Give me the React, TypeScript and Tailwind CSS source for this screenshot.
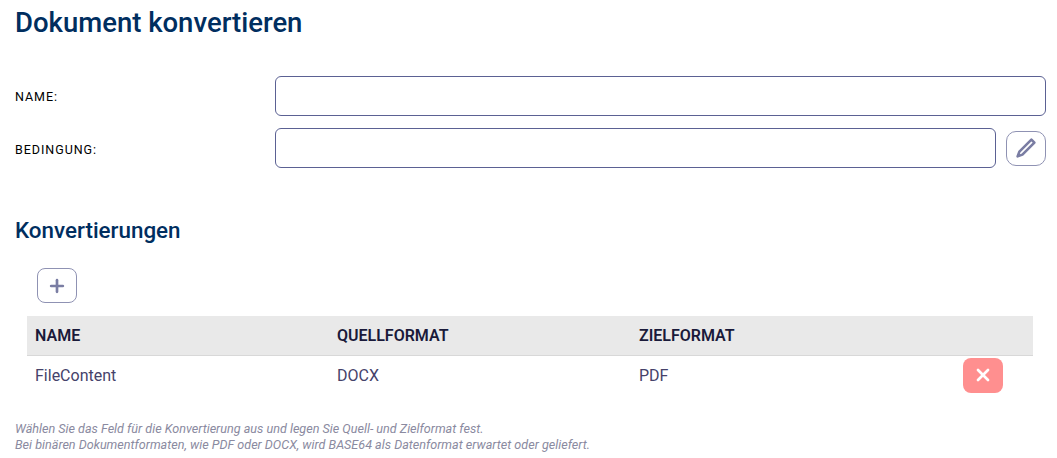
import { Plus, X } from 'lucide-react';

const rows = [{ name: 'FileContent', source: 'DOCX', target: 'PDF' }];

export default function App() {
  return (
    <main className="w-[1057px] h-[458px] overflow-hidden bg-white pl-[15px] pr-[11px] font-['Roboto',sans-serif]">
      <h1 className="pt-[6px] text-[27.5px] leading-[34px] font-medium text-[#002e5f]">Dokument konvertieren</h1>

      <div className="mt-[36px] flex items-center h-[40px]">
        <label className="w-[260px] pt-[3px] text-[12.5px] tracking-[0.95px] text-black">NAME:</label>
        <input className="flex-1 h-[40px] rounded-[6px] border border-[#5b6193] bg-white" />
      </div>
      <div className="mt-[12px] flex items-center h-[40px]">
        <label className="w-[260px] pt-[5px] text-[12.5px] tracking-[0.95px] text-black">BEDINGUNG:</label>
        <input className="flex-1 h-[40px] rounded-[6px] border border-[#5b6193] bg-white" />
        <button className="ml-[10px] w-[40px] h-[35px] flex items-center justify-center rounded-[10px] border border-[#8f92b3] bg-white text-[#7a7da3]">
          <svg width="22" height="22" viewBox="0 0 22 22" fill="none" stroke="currentColor" strokeWidth="2.6" strokeLinejoin="round">
            <path d="M16.4 2.6 L19.4 5.6 L7.4 17.6 L2.6 19.4 L4.4 14.6 Z" />
          </svg>
        </button>
      </div>

      <h2 className="mt-[48px] text-[22.4px] leading-[28px] font-medium text-[#002e5f]">Konvertierungen</h2>

      <div className="pl-[12px] pr-[13px]">
        <button className="mt-[24px] ml-[10px] w-[40px] h-[35px] flex items-center justify-center rounded-[8px] border border-[#8f92b3] bg-white text-[#7a7da3]">
          <Plus size={20} strokeWidth={3.2} />
        </button>
        <table className="mt-[13px] w-full table-fixed border-collapse text-left text-[16px]">
          <thead>
            <tr className="h-[39px] bg-[#e9e9e9] border-b border-[#d8d8d8] text-[#1a1a3a]">
              <th className="w-[302px] pl-[8px] pt-[2px] font-semibold">NAME</th>
              <th className="w-[302px] pl-[8px] pt-[2px] font-semibold">QUELLFORMAT</th>
              <th className="pl-[8px] pt-[2px] font-semibold">ZIELFORMAT</th>
              <th className="w-[70px]" />
            </tr>
          </thead>
          <tbody>
            {rows.map((row) => (
              <tr key={row.name} className="h-[40px] text-[#45426a]">
                <td className="pl-[8px] pt-[1px]">{row.name}</td>
                <td className="pl-[8px] pt-[1px]">{row.source}</td>
                <td className="pl-[8px] pt-[1px]">{row.target}</td>
                <td>
                  <button className="w-[40px] h-[35px] flex items-center justify-center rounded-[8px] bg-[#ff8f8f] text-white">
                    <X size={20} strokeWidth={3.2} />
                  </button>
                </td>
              </tr>
            ))}
          </tbody>
        </table>
      </div>

      <p className="mt-[26px] text-[12.6px] leading-[16px] italic text-[#8a8aa0]">
        Wählen Sie das Feld für die Konvertierung aus und legen Sie Quell- und Zielformat fest.
        <br />
        Bei binären Dokumentformaten, wie PDF oder DOCX, wird BASE64 als Datenformat erwartet oder geliefert.
      </p>
    </main>
  );
}
